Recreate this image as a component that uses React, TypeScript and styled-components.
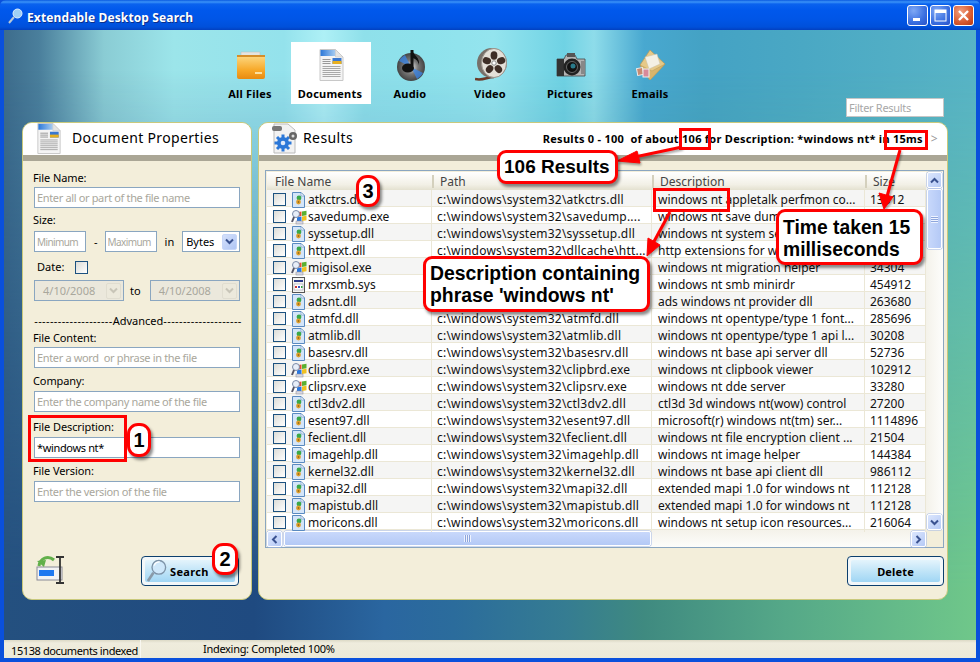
import React from "react";
import styled, { createGlobalStyle } from "styled-components";

const UI = `"Noto Sans", "DejaVu Sans", sans-serif`;

const Global = createGlobalStyle`
  html, body { margin: 0; padding: 0; background: #fff; }
  body { font-family: ${UI}; font-size: 12px; color: #000; overflow: hidden; }
  * { box-sizing: border-box; }
`;

const Win = styled.div`
  position: relative; width: 980px; height: 662px; display: flex; flex-direction: column;
  background: #0a50dc; overflow: hidden;
`;
const TitleBar = styled.div`
  height: 30px; flex: none; display: flex; align-items: center; padding: 0 6px 0 8px;
  background: linear-gradient(to bottom, #0a5ae0 0, #3b93f8 2px, #0a62ee 4px, #0058ec 10px, #0055e6 20px, #0050da 27px, #0240c0 30px);
  border-radius: 6px 6px 0 0;
`;
const TitleIcon = styled.svg`margin-top: 1px; flex: none;`;
const TitleText = styled.div`
  margin: 6px 0 0 4px; color: #fff; font: bold 12px/16px ${UI}; letter-spacing: .13px; text-shadow: 1px 1px 0 #0b2f8a;
`;
const WinButtons = styled.div`margin-left: auto; display: flex; gap: 2px;`;
const WinBtn = styled.div<{ $close?: boolean }>`
  width: 21px; height: 21px; border: 1px solid #fff; border-radius: 3px; display: flex; align-items: center; justify-content: center;
  background: ${(p) => p.$close
    ? "radial-gradient(circle at 35% 30%, #f0a080, #d85a30 60%, #b83810)"
    : "radial-gradient(circle at 30% 25%, #7ea8f5, #3a6fe0 60%, #2a52c8)"};
`;
const Body = styled.div`
  position: relative; flex: 1; margin: 0 4px; display: flex; flex-direction: column; padding: 0 28px 40px 18px; min-height: 0;
  background: linear-gradient(to right, #3d6c8c 0, #4a7f9c 35px, #8accd4 100px, #9ce5ea 170px, #94e2ec 280px, #aef0f6 320px, #8fe0ea 360px, #8ee2ec 420px, #94e4ee 490px, #6fd2e4 560px, #8edcea 590px, #48a8d0 640px, #44a2c4 700px, #4aa8c4 800px, #58b4c6 976px);
  &::before {
    content: ""; position: absolute; inset: 0; pointer-events: none;
    background: linear-gradient(to right, #24507f 0, #1f4a80 250px, #2a66a0 380px, #2b6c9c 450px, #357c92 560px, #3f8a80 640px, #55a888 780px, #70c88a 976px);
    -webkit-mask-image: linear-gradient(to bottom, transparent 40px, #000 560px);
    mask-image: linear-gradient(to bottom, transparent 40px, #000 560px);
  }
  & > * { position: relative; }
`;
const NavRow = styled.div`height: 92px; flex: none; display: flex; padding: 12px 0 0 189px;`;
const Tab = styled.div<{ $active?: boolean }>`
  width: 80px; height: 62px; display: flex; flex-direction: column; align-items: center; padding: 5px 2px 0 0;
  background: ${(p) => (p.$active ? "#fff" : "transparent")};
`;
const TabIcon = styled.div`height: 36px; padding-left: 2px; display: flex; align-items: center; justify-content: center;`;
const TabLabel = styled.div`margin-top: 4px; font: bold 11px/14px ${UI}; letter-spacing: .2px; color: #000;`;
const Filter = styled.input`
  margin-left: auto; margin-top: 56px; margin-right: 4px; width: 98px; height: 19px; border: 1px solid #c6c6c6; padding: 0 2px;
  background: #fff; font: 11px ${UI}; letter-spacing: -.3px; &::placeholder { color: #a8a8a8; opacity: 1; }
`;
const Panels = styled.div`flex: 1; display: flex; gap: 6px; min-height: 0;`;
const Panel = styled.div<{ $grow?: boolean }>`
  ${(p) => (p.$grow ? "flex: 1;" : "width: 230px;")}
  display: flex; flex-direction: column; background: #f3eeda; border: 1px solid #c9c97c; border-radius: 10px; overflow: hidden;
`;
const PanelHead = styled.div`
  flex: none; background: #fff; border-bottom: 6px solid #aaa695; height: 38px; display: flex; align-items: center; position: relative;
`;
const HeadIcon = styled.div<{ $ml: number }>`margin-left: ${(p) => p.$ml}px; height: 32px;`;
const HeadTitle = styled.div<{ $left: number; $ls: number }>`
  margin-left: ${(p) => p.$left}px; letter-spacing: ${(p) => p.$ls}px; font: 14px/20px ${UI}; padding-bottom: 2px;
`;
const Summary = styled.div`
  margin-left: auto; padding: 0 9px 0 0; white-space: pre; font: bold 11px/14px ${UI}; letter-spacing: .27px; display: flex; align-items: center;
`;
const Next = styled.span`margin-left: 8px; color: #999; font-weight: 400; font-size: 12px;`;
const Form = styled.div`flex: 1; display: flex; flex-direction: column; padding: 10px 12px 13px 10px; min-height: 0;`;
const Label = styled.div`font: 11px/14px ${UI}; height: 14px; letter-spacing: -.1px;`;
const TextInput = styled.input<{ $w?: number; $ml?: number; $small?: boolean }>`
  display: block; flex: none; width: ${(p) => p.$w ?? 206}px; height: 21px; margin-left: ${(p) => p.$ml ?? 1}px; padding: 0 2px; background: #fff; border: 1px solid #8aa6c0;
  font: ${(p) => (p.$small ? 10 : 11)}px ${UI}; letter-spacing: ${(p) => (p.$small ? -0.6 : -0.35)}px; color: #000; outline: none; &::placeholder { color: #a9a79c; opacity: 1; }
`;
const Field = styled.div<{ $top: number; $gap?: number }>`
  margin-top: ${(p) => p.$top}px; display: flex; flex-direction: column; gap: ${(p) => p.$gap ?? 3}px;
`;
const Line = styled.div<{ $top: number }>`margin-top: ${(p) => p.$top}px; display: flex; align-items: center; font: 11px/14px ${UI};`;
const Word = styled.span<{ $ml: number }>`margin-left: ${(p) => p.$ml}px; flex: none;`;
const Fake = styled.div<{ $w: number; $off?: boolean; $ml?: number }>`
  flex: none; width: ${(p) => p.$w}px; height: 21px; margin-left: ${(p) => p.$ml ?? 0}px; display: flex; align-items: center; justify-content: space-between;
  border: 1px solid #8aa6c0; padding: 0 2px 0 ${(p) => (p.$off ? 8 : 3)}px; font: 11px ${UI};
  background: ${(p) => (p.$off ? "#ebe8dc" : "#fff")}; color: ${(p) => (p.$off ? "#a9a79c" : "#000")};
`;
const DropBtn = styled.div<{ $off?: boolean }>`
  width: 15px; height: 16px; border-radius: 2px; display: flex; align-items: center; justify-content: center;
  background: ${(p) => (p.$off ? "#ece9dc" : "linear-gradient(135deg, #d4e0fb, #b0c6f4)")}; border: 1px solid ${(p) => (p.$off ? "#e0ddd0" : "#c6d6f8")};
`;
const Check = styled.div<{ $ml?: number }>`
  width: 13px; height: 13px; flex: none; margin-left: ${(p) => p.$ml ?? 0}px; border: 1px solid #1c5180; background: linear-gradient(135deg, #dcdcd7, #fff);
`;
const Adv = styled.div`margin: 13px 0 0 1px; font: 11px/14px ${UI}; white-space: pre; width: 208px; overflow: hidden; display: flex; justify-content: center;`;
const Dashes = styled.span`letter-spacing: .38px;`;
const FootRow = styled.div`margin-top: auto; display: flex; justify-content: space-between; align-items: flex-end; padding-left: 3px;`;
const Button = styled.div<{ $w: number }>`
  width: ${(p) => p.$w}px; height: 30px; border: 1px solid #0c3f6e; border-radius: 4px; padding: 3px; background: #f2f7f9;
`;
const ButtonFace = styled.div<{ $icon?: boolean }>`
  height: 100%; border-radius: 2px; display: flex; align-items: center; justify-content: ${(p) => (p.$icon ? "flex-start" : "center")};
  padding-left: ${(p) => (p.$icon ? 2 : 0)}px; font: bold 11px ${UI}; letter-spacing: .15px;
  background: linear-gradient(to bottom, #e4f4fc 0, #c4e6f8 45%, #a0d6f4 100%);
`;
const ButtonText = styled.span`margin-left: 3px; letter-spacing: .35px;`;
const TableWrap = styled.div`
  margin: 9px 3px 0 6px; height: 378px; border: 1px solid #8aa6c0; background: #f3eeda; display: flex; flex-direction: column; padding: 1px 1px 0 1px;
`;
const Top = styled.div`flex: 1; display: flex; min-height: 0;`;
const Grid = styled.div`width: 659px; display: flex; flex-direction: column;`;
const HeaderRow = styled.div`
  height: 18px; display: grid; grid-template-columns: 165px 220px 213px 61px; background: linear-gradient(#fff, #f2f0e6 70%, #e4e1d0);
`;
const HeadCell = styled.div`
  font: 12px/20px ${UI}; color: #444; padding-left: 8px; position: relative; white-space: nowrap;
  &:not(:first-child)::before { content: ""; position: absolute; left: 0; top: 3px; height: 13px; border-left: 2px solid #d4d0bd; }
`;
const Row = styled.div<{ $odd: boolean }>`
  height: 17px; display: grid; grid-template-columns: 165px 220px 213px 61px; border-bottom: 1px solid #ebe7d6;
  background: ${(p) => (p.$odd ? "#f5f5f4" : "#fff")};
`;
const Cell = styled.div`
  position: relative; z-index: 1; font: 12px/19px ${UI}; padding-left: 5px; border-right: 1px solid #ebe7d6; white-space: nowrap; color: #111;
`;
const PathCell = styled(Cell)`letter-spacing: .2px;`;
const DescCell = styled(Cell)`padding-left: 6px;`;
const NameCell = styled(Cell)`display: flex; align-items: center; padding-left: 6px;`;
const IconSlot = styled.div`width: 18px; margin-left: 4px; height: 16px; flex: none; display: flex; justify-content: center; padding-right: 1px;`;
const VBar = styled.div`
  width: 17px; display: flex; flex-direction: column; background: linear-gradient(to right, #f4f2ea, #fdfdfb); padding: 0 1px;
`;
const ScrollBtn = styled.div`
  flex: none; width: 15px; height: 16px; border: 1px solid #fff; border-radius: 2px; display: flex; align-items: center; justify-content: center;
  background: linear-gradient(135deg, #dbe6fd, #b6caf6); box-shadow: 0 0 0 .5px #9fb6e6;
`;
const VThumb = styled.div`
  height: 60px; margin-top: 1px; flex: none; width: 15px; border: 1px solid #fff; border-radius: 2px; background: linear-gradient(to right, #c8d8fb, #b4c9f6); box-shadow: 0 0 0 .5px #9fb6e6;
  display: flex; align-items: center; justify-content: center;
`;
const HBar = styled.div`
  width: 659px; height: 17px; flex: none; display: flex; padding-top: 1px; background: linear-gradient(#f4f2ea, #fdfdfb);
`;
const HThumb = styled.div`
  width: 367px; margin-left: 2px; height: 15px; border: 1px solid #fff; border-radius: 2px; background: linear-gradient(#c8d8fb, #b4c9f6); box-shadow: 0 0 0 .5px #9fb6e6;
  display: flex; align-items: center; justify-content: center;
`;
const Grip = styled.div<{ $v?: boolean }>`
  width: 7px; height: 7px;
  background: repeating-linear-gradient(${(p) => (p.$v ? "to bottom" : "to right")}, #eef3ff 0 1px, #8ea6dc 1px 2px);
`;
const Fill = styled.div`flex: 1;`;
const DeleteRow = styled.div`margin: 8px 3px 0 0; display: flex; justify-content: flex-end;`;
const Status = styled.div`
  height: 18px; flex: none; margin: 0 4px; background: linear-gradient(#dcd9c6, #efecdd 3px, #ece9d8); display: flex; font: 11px/18px ${UI}; position: relative;
`;
const StatusA = styled.div`width: 137px; padding: 2px 0 0 7px; border-right: 1px solid #f8f7f0; white-space: nowrap; letter-spacing: -.4px;`;
const StatusB = styled.div`margin-left: 62px; white-space: nowrap; letter-spacing: -.3px;`;
const BottomEdge = styled.div`height: 4px; flex: none; background: #0a50dc;`;

const Overlay = styled.div`position: absolute; inset: 0; z-index: 5; pointer-events: none;`;
const ArrowLayer = styled.svg`position: absolute; left: 0; top: 0; filter: drop-shadow(1px 2px 1px rgba(0,0,0,.35));`;
const RedBox = styled.div<{ $x: number; $y: number; $w: number; $h: number }>`
  position: absolute; left: ${(p) => p.$x}px; top: ${(p) => p.$y}px; width: ${(p) => p.$w}px; height: ${(p) => p.$h}px; border: 3px solid #f00;
`;
const Callout = styled.div<{ $x: number; $y: number; $w: number; $h: number; $size: number; $pt?: number }>`
  position: absolute; left: ${(p) => p.$x}px; top: ${(p) => p.$y}px; width: ${(p) => p.$w}px; height: ${(p) => p.$h}px;
  border: 3px solid #f00; border-radius: 9px; background: #fff; box-shadow: 2px 3px 3px rgba(0,0,0,.45);
  font: bold ${(p) => p.$size}px/22px "Liberation Sans", Arial, sans-serif; color: #000; padding: ${(p) => p.$pt ?? 3}px 0 0 4px; white-space: pre;
`;
const Badge = styled.div<{ $x: number; $y: number; $w: number; $h: number }>`
  position: absolute; left: ${(p) => p.$x}px; top: ${(p) => p.$y}px; width: ${(p) => p.$w}px; height: ${(p) => p.$h}px;
  border: 3px solid #f00; border-radius: 11px; background: #fff; box-shadow: 2px 3px 3px rgba(0,0,0,.45);
  display: flex; align-items: center; justify-content: center; font: bold 20px "Liberation Sans", Arial, sans-serif;
`;

const ChevronSvg = styled.svg<{ $r: number }>`transform: rotate(${(p) => p.$r}deg);`;
const Chevron = ({ dir = "down", color = "#3a5290" }: { dir?: "down" | "up" | "left" | "right"; color?: string }) => (
  <ChevronSvg $r={{ down: 0, up: 180, left: 90, right: -90 }[dir]} width="9" height="7" viewBox="0 0 9 7">
    <path d="M1 1.5 L4.5 5 L8 1.5" fill="none" stroke={color} strokeWidth="2" />
  </ChevronSvg>
);

const DocArt = ({ w, h }: { w: number; h: number }) => (
  <svg width={w} height={h} viewBox="0 0 24 32">
    <defs>
      <linearGradient id="docb" x1="0" x2="1"><stop offset="0" stopColor="#2c78d8" /><stop offset="1" stopColor="#a8cdf2" /></linearGradient>
    </defs>
    <path d="M.5.5H16L23.5 8V31.5H.5Z" fill="#f4f4f4" stroke="#c8c8c8" />
    <path d="M1 1H16V7H1Z" fill="url(#docb)" />
    <path d="M16 .5V8H23.5Z" fill="#e4e4e4" stroke="#c0c0c0" strokeWidth=".5" />
    <rect x="13" y="9" width="9" height="6" fill="#3a78d0" />
    <rect x="13" y="12" width="9" height="3" fill="#e8b020" />
    {[10, 12, 14].map((y) => <rect key={y} x="3" y={y} width="8" height="1" fill="#9a9a9a" />)}
    {[17, 19, 21, 23, 25, 27].map((y) => <rect key={y} x="3" y={y} width="18" height="1" fill="#a8a8a8" />)}
  </svg>
);

const FolderIcon = () => (
  <svg width="30" height="30" viewBox="0 0 30 30">
    <defs><linearGradient id="fo" x1="0" y1="0" x2="0" y2="1"><stop offset="0" stopColor="#fcd47a" /><stop offset=".6" stopColor="#f7a828" /><stop offset="1" stopColor="#e88a10" /></linearGradient></defs>
    <path d="M5 2H24V8H5Z" fill="#e4e4e0" stroke="#bbb" strokeWidth=".5" />
    <path d="M1 5H29V8H1Z" fill="#d48e2a" />
    <path d="M1 7H29V27Q29 29 27 29H3Q1 29 1 27Z" fill="url(#fo)" />
    <rect x="19" y="22" width="7" height="2" fill="#fbe0a0" />
  </svg>
);
const MusicIcon = () => (
  <svg width="30" height="32" viewBox="0 0 30 32">
    <defs><radialGradient id="cd"><stop offset="0" stopColor="#eee" /><stop offset=".5" stopColor="#777" /><stop offset="1" stopColor="#444" /></radialGradient></defs>
    <circle cx="15" cy="18" r="14" fill="url(#cd)" />
    <path d="M15 18L3 12A14 14 0 0 1 9 6Z" fill="#3a86e8" opacity=".75" />
    <path d="M15 18L27 24A14 14 0 0 1 21 30Z" fill="#3a86e8" opacity=".75" />
    <path d="M16 1V17" stroke="#111" strokeWidth="3" />
    <path d="M16 1C18 7 24 8 23 16C22 11 19 10 17 9Z" fill="#111" />
    <ellipse cx="12" cy="19" rx="6" ry="4.5" fill="#111" />
  </svg>
);
const ReelIcon = () => (
  <svg width="32" height="34" viewBox="0 0 32 34">
    <path d="M0 31C8 33 12 29 19 29" stroke="#6a3a28" strokeWidth="2.5" fill="none" />
    <ellipse cx="17" cy="15" rx="15" ry="15" fill="#77716a" />
    <ellipse cx="19" cy="15" rx="12.5" ry="14.5" fill="#e4e0d8" stroke="#9a948c" />
    {[0, 72, 144, 216, 288].map((a) => (
      <ellipse key={a} cx="19" cy="7.5" rx="3.4" ry="4.2" fill="#3e2e26" transform={`rotate(${a} 19 15)`} />
    ))}
    <circle cx="19" cy="15" r="2.2" fill="#fff" stroke="#888" />
  </svg>
);
const CameraIcon = () => (
  <svg width="30" height="26" viewBox="0 0 30 26">
    <path d="M1 7H8L10 3H19L21 7H29V24H1Z" fill="#b4b4b4" stroke="#444" strokeWidth=".8" />
    <rect x="1" y="7" width="7" height="17" fill="#333" />
    <rect x="11" y="1" width="8" height="4" fill="#555" />
    <circle cx="16" cy="15" r="8.5" fill="#222" />
    <circle cx="16" cy="15" r="5.5" fill="#111" stroke="#666" />
    <circle cx="17" cy="14" r="2.5" fill="#2a7a8a" />
    <rect x="25" y="9" width="3" height="13" fill="#888" />
  </svg>
);
const MailIcon = () => (
  <svg width="30" height="32" viewBox="0 0 30 32">
    <path d="M14 1L29 15L14 31L4 16Z" fill="#e6c988" stroke="#b89a58" strokeWidth=".7" />
    <path d="M9 8L21 5L24 15L13 20Z" fill="#f4f0e4" stroke="#c8c0a8" strokeWidth=".5" />
    <path d="M4 16L16 22L29 15L14 31Z" fill="#d9b56c" stroke="#b89a58" strokeWidth=".5" />
    <rect x="1" y="19" width="6" height="7" fill="#c88a70" stroke="#eee" transform="rotate(-10 4 22)" />
    <rect x="7" y="20" width="6" height="8" fill="#d88a9a" stroke="#eee" />
  </svg>
);
const GearDoc = () => (
  <svg width="28" height="31" viewBox="0 0 28 31">
    <path d="M3 1H17L24 7V30H3Z" fill="#f2f2f2" stroke="#bbb" />
    <rect x="1" y="3" width="10" height="5" rx="2" fill="#777" />
    <g fill="#2c78d8">
      <circle cx="12" cy="20" r="6" />
      {[0, 45, 90, 135, 180, 225, 270, 315].map((a) => <rect key={a} x="10.5" y="11.5" width="3" height="3.5" transform={`rotate(${a} 12 20)`} />)}
    </g>
    <circle cx="12" cy="20" r="2.3" fill="#dfeafa" />
    <circle cx="22" cy="13" r="4" fill="#666" />
    <circle cx="22" cy="13" r="1.5" fill="#ddd" />
  </svg>
);
const Reset = () => (
  <svg width="30" height="32" viewBox="0 0 30 32">
    <rect x="1" y="13" width="25" height="13" fill="#f2f2f4" stroke="#8a8a96" />
    <rect x="3" y="16" width="15" height="6" fill="#1f78f0" />
    <path d="M3 12C4 4 12 1 18 6" fill="none" stroke="#62b04a" strokeWidth="3" />
    <path d="M1 7L8 13L10 6Z" fill="#62b04a" />
    <path d="M20 3H28M24 3V29M20 29H28" stroke="#333" strokeWidth="1.8" fill="none" />
  </svg>
);
const Magnifier = () => (
  <svg width="20" height="26" viewBox="0 0 22 26">
    <circle cx="13" cy="9" r="7.5" fill="#cfe8fa" stroke="#7e94a8" strokeWidth="1.5" />
    <path d="M7 15L1 24" stroke="#8a9aa8" strokeWidth="3" />
    <path d="M8 7A6 6 0 0 1 14 3" stroke="#fff" strokeWidth="1.5" fill="none" />
  </svg>
);
const DllIcon = () => (
  <svg width="13" height="16" viewBox="0 0 13 16">
    <path d="M.5.5H9L12.5 4V15.5H.5Z" fill="#d4e5f9" stroke="#5a8ac0" />
    <path d="M9 .5V4H12.5Z" fill="#fff" stroke="#5a8ac0" strokeWidth=".6" />
    <circle cx="7" cy="6" r="2.4" fill="#3aa84a" />
    <circle cx="6.5" cy="10" r="2.4" fill="#e0a030" />
    <circle cx="6.5" cy="10" r=".8" fill="#7a5a10" />
  </svg>
);
const ExeIcon = () => (
  <svg width="16" height="16" viewBox="0 0 16 16">
    <g transform="skewY(-8) translate(0 2)">
      <rect x="6" y="2" width="4.5" height="4.5" fill="#e8502a" />
      <rect x="11" y="2" width="4.5" height="4.5" fill="#5ab030" />
      <rect x="6" y="7" width="4.5" height="4.5" fill="#2a78e0" />
      <rect x="11" y="7" width="4.5" height="4.5" fill="#f0c020" />
    </g>
    <circle cx="5" cy="5" r="3.5" fill="#e8eef8" stroke="#7a8aa8" />
    <path d="M3 8L1 13" stroke="#556" strokeWidth="2" />
    <rect x="5" y="12" width="7" height="3" fill="#d8d8e0" stroke="#889" strokeWidth=".5" />
  </svg>
);
const SysIcon = () => (
  <svg width="13" height="16" viewBox="0 0 13 16">
    <rect x=".5" y=".5" width="12" height="15" fill="#f4f4f0" stroke="#555" />
    <rect x="2" y="3" width="9" height="2" fill="#2a3a8a" />
    <rect x="2" y="7" width="9" height="6" fill="#fff" stroke="#889" strokeWidth=".5" />
    <rect x="3" y="9" width="2" height="2" fill="#d03030" />
    <rect x="6" y="9" width="2" height="2" fill="#3050c0" />
    <rect x="9" y="9" width="1.5" height="2" fill="#30a040" />
  </svg>
);

type Kind = "dll" | "exe" | "sys";
const P = "c:\\windows\\system32\\";
const rows: [Kind, string, string, string, string][] = [
  ["dll", "atkctrs.dll", P + "atkctrs.dll", "windows nt appletalk perfmon co...", "13312"],
  ["exe", "savedump.exe", P + "savedump....", "windows nt save dump", "21504"],
  ["dll", "syssetup.dll", P + "syssetup.dll", "windows nt system setup", "980992"],
  ["dll", "httpext.dll", P + "dllcache\\htt...", "http extensions for windows", "32768"],
  ["exe", "migisol.exe", P + "migisol.exe", "windows nt migration helper", "34304"],
  ["sys", "mrxsmb.sys", P + "drivers\\mrx...", "windows nt smb minirdr", "454912"],
  ["dll", "adsnt.dll", P + "adsnt.dll", "ads windows nt provider dll", "263680"],
  ["dll", "atmfd.dll", P + "atmfd.dll", "windows nt opentype/type 1 font...", "285696"],
  ["dll", "atmlib.dll", P + "atmlib.dll", "windows nt opentype/type 1 api l...", "30208"],
  ["dll", "basesrv.dll", P + "basesrv.dll", "windows nt base api server dll", "52736"],
  ["exe", "clipbrd.exe", P + "clipbrd.exe", "windows nt clipbook viewer", "102912"],
  ["exe", "clipsrv.exe", P + "clipsrv.exe", "windows nt dde server", "33280"],
  ["dll", "ctl3dv2.dll", P + "ctl3dv2.dll", "ctl3d 3d windows nt(wow) control", "27200"],
  ["dll", "esent97.dll", P + "esent97.dll", "microsoft(r) windows nt(tm) ser...", "1114896"],
  ["dll", "feclient.dll", P + "feclient.dll", "windows nt file encryption client ...", "21504"],
  ["dll", "imagehlp.dll", P + "imagehlp.dll", "windows nt image helper", "144384"],
  ["dll", "kernel32.dll", P + "kernel32.dll", "windows nt base api client dll", "986112"],
  ["dll", "mapi32.dll", P + "mapi32.dll", "extended mapi 1.0 for windows nt", "112128"],
  ["dll", "mapistub.dll", P + "mapistub.dll", "extended mapi 1.0 for windows nt", "112128"],
  ["dll", "moricons.dll", P + "moricons.dll", "windows nt setup icon resources...", "216064"],
];
const kindIcon = { dll: <DllIcon />, exe: <ExeIcon />, sys: <SysIcon /> };

const tabs: [string, React.ReactNode][] = [
  ["All Files", <FolderIcon />],
  ["Documents", <DocArt w={25} h={32} />],
  ["Audio", <MusicIcon />],
  ["Video", <ReelIcon />],
  ["Pictures", <CameraIcon />],
  ["Emails", <MailIcon />],
];

const App = () => (
  <>
    <Global />
    <Win>
      <TitleBar>
        <TitleIcon width="15" height="16" viewBox="0 0 15 16">
          <circle cx="9.5" cy="5.5" r="4.5" fill="#9fd0f4" stroke="#dfefff" />
          <path d="M6 9L1 15" stroke="#b8c8d8" strokeWidth="2" />
        </TitleIcon>
        <TitleText>Extendable Desktop Search</TitleText>
        <WinButtons>
          <WinBtn><svg width="11" height="11"><rect x="1" y="8" width="7" height="3" fill="#fff" /></svg></WinBtn>
          <WinBtn><svg width="13" height="13"><rect x="1" y="1" width="11" height="11" fill="none" stroke="#fff" /><rect x="1" y="1" width="11" height="3" fill="#fff" /></svg></WinBtn>
          <WinBtn $close><svg width="13" height="13"><path d="M2 2L11 11M11 2L2 11" stroke="#fff" strokeWidth="2.4" /></svg></WinBtn>
        </WinButtons>
      </TitleBar>
      <Body>
        <NavRow>
          {tabs.map(([label, icon]) => (
            <Tab key={label} $active={label === "Documents"}>
              <TabIcon>{icon}</TabIcon>
              <TabLabel>{label}</TabLabel>
            </Tab>
          ))}
          <Filter placeholder="Filter Results" readOnly />
        </NavRow>
        <Panels>
          <Panel>
            <PanelHead>
              <HeadIcon $ml={14}><DocArt w={24} h={31} /></HeadIcon>
              <HeadTitle $left={11} $ls={0.35}>Document Properties</HeadTitle>
            </PanelHead>
            <Form>
              <Field $top={0} $gap={2}><Label>File Name:</Label><TextInput placeholder="Enter all or part of the file name" readOnly /></Field>
              <Field $top={5} $gap={4}>
                <Label>Size:</Label>
                <Line $top={0}>
                  <TextInput $w={52} $small placeholder="Minimum" readOnly />
                  <Word $ml={8}>-</Word>
                  <TextInput $w={52} $ml={7} $small placeholder="Maximum" readOnly />
                  <Word $ml={8}>in</Word>
                  <Fake $w={58} $ml={8}>Bytes<DropBtn><Chevron /></DropBtn></Fake>
                </Line>
              </Field>
              <Line $top={8}><Word $ml={4}>Date:</Word><Check $ml={11} /></Line>
              <Line $top={6}>
                <Fake $w={90} $ml={1} $off>4/10/2008<DropBtn $off><Chevron color="#c8c5b8" /></DropBtn></Fake>
                <Word $ml={6}>to</Word>
                <Fake $w={90} $ml={9} $off>4/10/2008<DropBtn $off><Chevron color="#c8c5b8" /></DropBtn></Fake>
              </Line>
              <Adv><Dashes>--------------------</Dashes>Advanced<Dashes>--------------------</Dashes></Adv>
              <Field $top={3} $gap={2}><Label>File Content:</Label><TextInput placeholder="Enter a word  or phrase in the file" readOnly /></Field>
              <Field $top={6}><Label>Company:</Label><TextInput placeholder="Enter the company name of the file" readOnly /></Field>
              <Field $top={8}><Label>File Description:</Label><TextInput defaultValue="*windows nt*" readOnly /></Field>
              <Field $top={6}><Label>File Version:</Label><TextInput placeholder="Enter the version of the file" readOnly /></Field>
              <FootRow>
                <Reset />
                <Button $w={98}><ButtonFace $icon><Magnifier /><ButtonText>Search</ButtonText></ButtonFace></Button>
              </FootRow>
            </Form>
          </Panel>
          <Panel $grow>
            <PanelHead>
              <HeadIcon $ml={12}><GearDoc /></HeadIcon>
              <HeadTitle $left={4} $ls={0.4}>Results</HeadTitle>
              <Summary>{"Results 0 - 100  of about 106 for Description: *windows nt* in 15ms"}<Next>&gt;</Next></Summary>
            </PanelHead>
            <TableWrap>
              <Top>
                <Grid>
                  <HeaderRow>
                    <HeadCell>File Name</HeadCell><HeadCell>Path</HeadCell><HeadCell>Description</HeadCell><HeadCell>Size</HeadCell>
                  </HeaderRow>
                  {rows.map(([k, name, path, desc, size], i) => (
                    <Row key={name} $odd={i % 2 === 0}>
                      <NameCell><Check /><IconSlot>{kindIcon[k]}</IconSlot><span>{name}</span></NameCell>
                      <PathCell>{path}</PathCell>
                      <DescCell>{desc}</DescCell>
                      <Cell>{size}</Cell>
                    </Row>
                  ))}
                </Grid>
                <VBar>
                  <ScrollBtn><Chevron dir="up" /></ScrollBtn>
                  <VThumb><Grip $v /></VThumb>
                  <Fill />
                  <ScrollBtn><Chevron /></ScrollBtn>
                </VBar>
              </Top>
              <HBar>
                <ScrollBtn><Chevron dir="left" /></ScrollBtn>
                <HThumb><Grip /></HThumb>
                <Fill />
                <ScrollBtn><Chevron dir="right" /></ScrollBtn>
              </HBar>
            </TableWrap>
            <DeleteRow><Button $w={97}><ButtonFace>Delete</ButtonFace></Button></DeleteRow>
          </Panel>
        </Panels>
      </Body>
      <Status>
        <StatusA>15138 documents indexed</StatusA>
        <StatusB>Indexing: Completed 100%</StatusB>
      </Status>
      <BottomEdge />
      <Overlay>
        <ArrowLayer width="980" height="662" viewBox="0 0 980 662">
          <g fill="#f00" stroke="#f00">
            <path d="M682 147L630 158" strokeWidth="3" />
            <path d="M617 161L637 151L640 163Z" />
            <path d="M900 150L886 200" strokeWidth="3" />
            <path d="M884 209L879 193L893 197Z" />
            <path d="M670 212L651 247" strokeWidth="3" />
            <path d="M647 256L648 238L660 245Z" />
          </g>
        </ArrowLayer>
        <RedBox $x={679} $y={128} $w={32} $h={22} />
        <RedBox $x={884} $y={130} $w={44} $h={20} />
        <RedBox $x={653} $y={188} $w={77} $h={24} />
        <RedBox $x={28} $y={415} $w={99} $h={47} />
        <Callout $x={497} $y={150} $w={121} $h={34} $size={19}>106 Results</Callout>
        <Callout $x={423} $y={256} $w={227} $h={56} $size={19.4}>{"Description containing\nphrase 'windows nt'"}</Callout>
        <Callout $x={776} $y={209} $w={147} $h={56} $size={19.3} $pt={5}>{"Time taken 15\nmilliseconds"}</Callout>
        <Badge $x={127} $y={423} $w={24} $h={34}>1</Badge>
        <Badge $x={212} $y={543} $w={26} $h={32}>2</Badge>
        <Badge $x={356} $y={175} $w={24} $h={32}>3</Badge>
      </Overlay>
    </Win>
  </>
);

export default App;
